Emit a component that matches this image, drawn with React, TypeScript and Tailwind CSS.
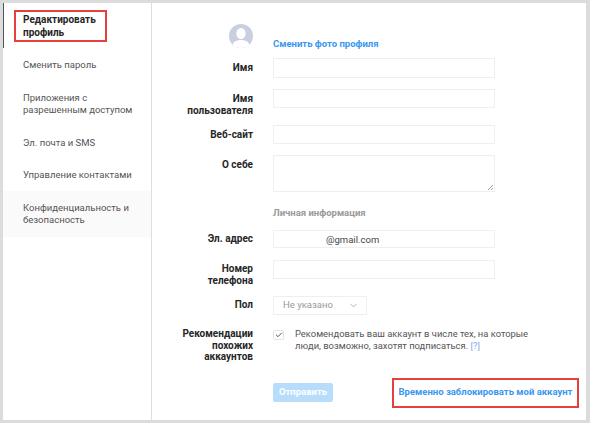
import { ChevronDown, Check } from "lucide-react";

const font = { fontFamily: 'Roboto, "Open Sans", sans-serif' };

function Row({
  label,
  mt,
  labelPt = "pt-[3px]",
  children,
}: {
  label: string[];
  mt: string;
  labelPt?: string;
  children: React.ReactNode;
}) {
  return (
    <div className={`flex gap-[20px] ${mt}`}>
      <div className={`w-[101px] shrink-0 ${labelPt} text-right text-[10px] leading-[11.5px] font-bold text-[#262626]`}>
        {label.map((l) => (
          <div key={l}>{l}</div>
        ))}
      </div>
      {children}
    </div>
  );
}

function Field({ h, value }: { h: string; value?: string }) {
  return (
    <div className={`w-[222px] ${h} border border-[#efefef] bg-white text-[9.5px] leading-[17px] text-[#444] pl-[52px]`}>
      {value}
    </div>
  );
}

function NavItem({ children, className }: { children: React.ReactNode; className: string }) {
  return (
    <div className={`pl-[20px] text-[9.5px] leading-[12.5px] text-[#555] whitespace-nowrap ${className}`}>
      {children}
    </div>
  );
}

export default function App() {
  return (
    <div
      className="w-[590px] h-[423px] bg-[#dcdcdc] pt-[3px] pl-[3px] pr-[4px] pb-[3px]"
      style={font}
    >
      <div className="flex h-full bg-white">
        {/* sidebar */}
        <div className="w-[149px] shrink-0 border-r border-[#dedede]">
          <div className="h-[45px] border-l border-[#555] pt-[7px]">
            <div className="ml-[10px] w-[93px] h-[32px] border-2 border-[#e5403c] pl-[7px] pt-[1px] text-[10px] leading-[13px] font-bold text-[#262626] whitespace-nowrap">
              Редактировать
              <br />
              профиль
            </div>
          </div>
          <NavItem className="pt-[11px]">Сменить пароль</NavItem>
          <NavItem className="pt-[20px]">
            Приложения с
            <br />
            разрешенным доступом
          </NavItem>
          <NavItem className="pt-[20px]">Эл. почта и SMS</NavItem>
          <NavItem className="pt-[20px]">Управление контактами</NavItem>
          <div className="mt-[9px] h-[46px] bg-[#fafafa] pl-[20px] pt-[11px] text-[9.5px] leading-[12.5px] text-[#555] whitespace-nowrap">
            Конфиденциальность и
            <br />
            безопасность
          </div>
        </div>

        {/* form */}
        <div className="flex-1 pt-[20px]">
          <div className="flex gap-[20px] h-[35px]">
            <div className="w-[101px] flex justify-end">
              <svg width="24" height="24" viewBox="0 0 24 24" className="mt-[1px]">
                <defs>
                  <clipPath id="avatar">
                    <circle cx="12" cy="12" r="12" />
                  </clipPath>
                </defs>
                <circle cx="12" cy="12" r="12" fill="#c9cfdf" />
                <g clipPath="url(#avatar)" fill="#fff">
                  <ellipse cx="12" cy="9.5" rx="4.6" ry="5.6" />
                  <path d="M3 24c0-6 4-8 9-8s9 2 9 8z" />
                </g>
              </svg>
            </div>
            <div className="pt-[15px] text-[9.5px] leading-[12px] font-bold text-[#3897f0]">
              Сменить фото профиля
            </div>
          </div>

          <Row label={["Имя"]} mt="" labelPt="pt-[4px]">
            <Field h="h-[20px]" />
          </Row>
          <Row label={["Имя", "пользователя"]} mt="mt-[11px]" labelPt="pt-[4px]">
            <Field h="h-[19px]" />
          </Row>
          <Row label={["Веб-сайт"]} mt="mt-[9px]" labelPt="pt-[4px]">
            <Field h="h-[19px]" />
          </Row>
          <Row label={["О себе"]} mt="mt-[11px]" labelPt="pt-[4px]">
            <div className="relative w-[222px] h-[37px] border border-[#efefef]">
              <svg width="7" height="7" viewBox="0 0 7 7" className="absolute right-0 bottom-0">
                <path d="M1 6 6 1M4 6 6 4" stroke="#888" strokeWidth="0.8" />
              </svg>
            </div>
          </Row>

          <div className="mt-[15px] ml-[121px] text-[9.5px] leading-[12px] font-bold text-[#999]">
            Личная информация
          </div>

          <Row label={["Эл. адрес"]} mt="mt-[11px]">
            <Field h="h-[18px]" value="@gmail.com" />
          </Row>
          <Row label={["Номер", "телефона"]} mt="mt-[12px]">
            <Field h="h-[19px]" />
          </Row>
          <Row label={["Пол"]} mt="mt-[10px]">
            <div className="flex w-[94px] h-[19px] items-center justify-between border border-[#efefef] pl-[9px] pr-[7px] text-[9.5px] text-[#999]">
              Не указано
              <ChevronDown size={11} strokeWidth={1.5} className="text-[#999]" />
            </div>
          </Row>
          <Row label={["Рекомендации", "похожих", "аккаунтов"]} mt="mt-[11px]" labelPt="pt-[2px]">
            <div className="flex gap-[11px]">
              <div className="mt-[4px] flex w-[11px] h-[10px] items-center justify-center rounded-[2px] border border-[#e4e4e4]">
                <Check size={8} strokeWidth={2.5} className="text-[#333]" />
              </div>
              <div className="pt-[2px] text-[9.4px] leading-[12px] text-[#555] whitespace-nowrap">
                Рекомендовать ваш аккаунт в числе тех, на которые
                <br />
                люди, возможно, захотят подписаться. <span className="text-[#7fa8e8]">[?]</span>
              </div>
            </div>
          </Row>

          <div className="mt-[15px] ml-[121px] flex items-center">
            <div className="flex w-[60px] h-[19px] items-center justify-center rounded-[2px] bg-[#b8dcfb] text-[9.5px] font-bold text-white">
              Отправить
            </div>
            <div className="ml-[59px] flex w-[187px] h-[30px] items-center justify-center border-2 border-[#e5403c] text-[9.5px] font-bold text-[#3897f0] whitespace-nowrap">
              Временно заблокировать мой аккаунт
            </div>
          </div>
        </div>
      </div>
    </div>
  );
}
